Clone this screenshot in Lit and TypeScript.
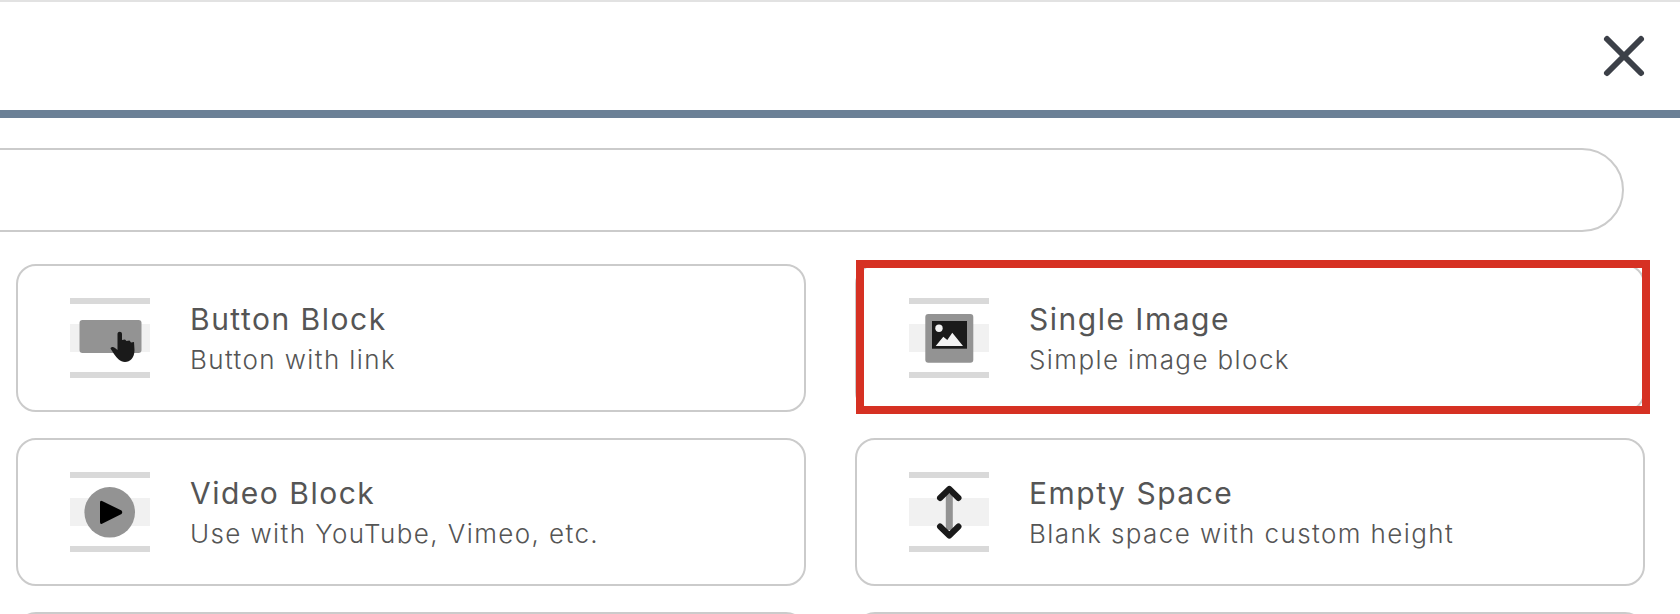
import { LitElement, html, css, svg } from 'lit';
import { customElement } from 'lit/decorators.js';

const icons: Record<string, unknown> = {
  button: svg`
    <rect x="9.5" y="22" width="62" height="33" rx="3" fill="#939393"/>
    <path d="M47.5 36C47.5 33 52 33 52 36L52 42L55 41.5L56.5 43L59.5 42.5L61 44.5L64 44L64.5 52C64.5 60 60 64 55 64C50 64 47 60 44 56L40.5 50.5C41 49 43 48.5 45 50L47.5 52Z" fill="#1a1a1a"/>`,
  image: svg`
    <rect x="16.3" y="16" width="48" height="48.7" rx="3" fill="#939393"/>
    <rect x="23" y="23" width="35" height="27.7" fill="#1a1a1a"/>
    <circle cx="30" cy="30.3" r="3.7" fill="#f2f2f2"/>
    <path d="M26.7 48L34.3 38.7L38.3 42L43.3 34.7L54 48Z" fill="#f2f2f2"/>`,
  video: svg`
    <circle cx="39.7" cy="40.3" r="25.3" fill="#939393"/>
    <path d="M32 29L51.5 38.5Q53 40.3 51.5 42L32 51.7Q30 52.5 30 50V30.5Q30 28 32 29Z" fill="#000"/>`,
  space: svg`
    <rect x="36.8" y="22" width="7" height="36" fill="#939393"/>
    <path d="M31 26L40.3 17L49.5 26M31 54.5L40.3 63.5L49.5 54.5" fill="none" stroke="#1a1a1a" stroke-width="6" stroke-linecap="round" stroke-linejoin="round"/>`,
};

const blocks = [
  { icon: 'button', title: 'Button Block', text: 'Button with link' },
  { icon: 'image', title: 'Single Image', text: 'Simple image block', marked: true },
  { icon: 'video', title: 'Video Block', text: 'Use with YouTube, Vimeo, etc.' },
  { icon: 'space', title: 'Empty Space', text: 'Blank space with custom height' },
];

@customElement('app-root')
export class AppRoot extends LitElement {
  static styles = css`
    :host {
      display: block;
      height: 614px;
      overflow: hidden;
      background: #fff;
      border-top: 2px solid #e2e2e2;
      box-sizing: border-box;
      font-family: Inter, "Liberation Sans", sans-serif;
      color: #555;
    }
    .head {
      display: flex;
      justify-content: flex-end;
      align-items: center;
      height: 116px;
      padding-right: 34px;
      box-sizing: border-box;
      border-bottom: 8px solid #6b8096;
    }
    .close {
      display: block;
    }
    .search {
      height: 84px;
      margin: 30px 56px 0 -60px;
      box-sizing: border-box;
      border: 2px solid #cbcbcb;
      border-radius: 42px;
    }
    .grid {
      display: grid;
      grid-template-columns: 790px 790px;
      grid-auto-rows: 148px;
      column-gap: 49px;
      row-gap: 26px;
      padding: 32px 0 0 16px;
    }
    .card {
      position: relative;
      display: flex;
      align-items: center;
      gap: 40px;
      padding-left: 52px;
      box-sizing: border-box;
      border: 2px solid #cbcbcb;
      border-radius: 20px;
    }
    .mark {
      position: absolute;
      top: -6px;
      left: -1px;
      right: -7px;
      bottom: -4px;
      border: 8px solid #d63123;
    }
    .icon {
      display: block;
      flex: none;
    }
    .title {
      font-size: 30px;
      font-weight: 400;
      line-height: 38px;
      letter-spacing: 1.5px;
    }
    .text {
      margin-top: 6px;
      font-size: 26px;
      font-weight: 300;
      line-height: 32px;
      letter-spacing: 1.4px;
    }
  `;

  renderIcon(name: string) {
    return html`<svg class="icon" width="80" height="80" viewBox="0 0 80 80">
      <rect width="80" height="6" y="0" fill="#d9d9d9"/>
      <rect width="80" height="28" y="26" fill="#f1f1f1"/>
      <rect width="80" height="6" y="74" fill="#d9d9d9"/>
      ${icons[name]}
    </svg>`;
  }

  render() {
    return html`
      <div class="head">
        <svg class="close" width="44" height="44" viewBox="0 0 44 44">
          <path d="M5 5L39 39M39 5L5 39" stroke="#3c4048" stroke-width="6" stroke-linecap="round"/>
        </svg>
      </div>
      <div class="search"></div>
      <div class="grid">
        ${blocks.map(b => html`
          <div class="card">
            ${this.renderIcon(b.icon)}
            <div>
              <div class="title">${b.title}</div>
              <div class="text">${b.text}</div>
            </div>
            ${b.marked ? html`<div class="mark"></div>` : ''}
          </div>
        `)}
        <div class="card"></div>
        <div class="card"></div>
      </div>
    `;
  }
}
